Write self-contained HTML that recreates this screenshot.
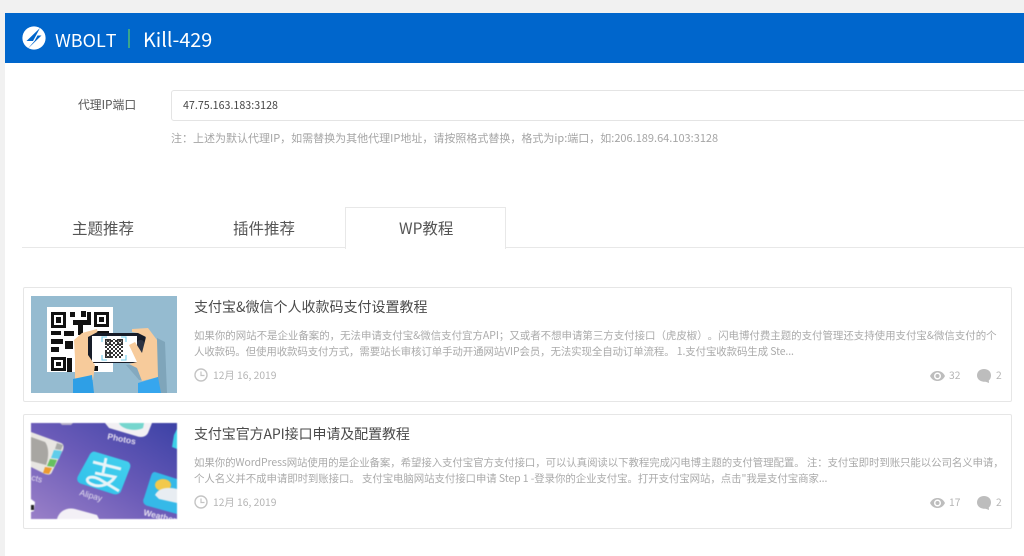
<!DOCTYPE html>
<html><head><meta charset="utf-8">
<style>
html,body{margin:0;padding:0;width:1024px;height:556px;overflow:hidden;background:#f1f1f1}
body{position:relative;font-family:"Noto Sans CJK SC","Liberation Sans",sans-serif;text-spacing-trim:space-all;font-weight:400}
.a{position:absolute;white-space:nowrap}
.card{position:absolute;left:23px;width:987px;height:113px;background:#fff;border:1px solid #e6e6e6;border-radius:2px}
.t{font-size:14px;color:#4a4a4a;line-height:20px}
.d{font-size:10.450px;color:#aaa;line-height:17px}
.m{font-size:10.300px;color:#b4b4b4;line-height:14px}
</style></head><body>
<div class="a" style="left:5px;top:13px;width:1019px;height:543px;background:#fff"></div>
<div class="a" style="left:5px;top:13px;width:1019px;height:50px;background:#0066cc"></div>
<svg class="a" style="left:22px;top:26px" width="24" height="24" viewBox="0 0 24 24"><circle cx="12" cy="12" r="11.600" fill="#fff"/><path d="M18 2L4.500 15H11L14 9.500Z" fill="#0066cc"/><path d="M19.500 9.500H15.500L12.500 15L5.500 23Z" fill="#0066cc"/></svg>
<div class="a" style="left:55px;top:27px;font-size:18px;line-height:26px;color:#fff">WBOLT</div>
<div class="a" style="left:128px;top:29px;width:2px;height:19px;background:#3aa58c"></div>
<div class="a" style="left:143px;top:26px;font-size:19.800px;line-height:26px;color:#fff">Kill-429</div>

<div class="a" style="left:78px;top:96px;font-size:11.800px;line-height:18px;color:#555">代理IP端口</div>
<div class="a" style="left:171px;top:90px;width:860px;height:29px;border:1px solid #e4e4e4;border-radius:3px;background:#fff"></div>
<div class="a" style="left:183px;top:97px;font-size:10.700px;line-height:18px;color:#444">47.75.163.183:3128</div>
<div class="a" style="left:171px;top:129px;font-size:11px;line-height:18px;color:#a5a5a5">注：上述为默认代理IP，如需替换为其他代理IP地址，请按照格式替换，格式为ip:端口，如:206.189.64.103:3128</div>

<div class="a" style="left:22px;top:247px;width:1002px;height:1px;background:#e8e8e8"></div>
<div class="a" style="left:72px;top:217px;font-size:15.500px;line-height:22px;color:#555">主题推荐</div>
<div class="a" style="left:233px;top:217px;font-size:15.500px;line-height:22px;color:#555">插件推荐</div>
<div class="a" style="left:345px;top:207px;width:159px;height:41px;background:#fff;border:1px solid #e8e8e8;border-bottom:0"></div>
<div class="a" style="left:399px;top:217px;font-size:15.500px;line-height:22px;color:#555">WP教程</div>

<div class="card" style="top:287px"></div>
<svg class="a" style="left:31px;top:296px;filter:blur(.35px)" width="146" height="97" viewBox="0 0 146 97">
<defs><pattern id="q" width="4" height="4" patternUnits="userSpaceOnUse"><rect width="4" height="4" fill="#fff"/><rect width="2" height="2" fill="#333"/><rect x="2" y="2" width="2" height="2" fill="#333"/></pattern></defs>
<rect width="146" height="97" fill="#95bbd0"/>
<path d="M126 42L134 46L136 97H126Z" fill="#7fa5ba"/>
<rect x="16" y="11" width="66" height="65" fill="#fff"/>
<g fill="#111">
<path fill-rule="evenodd" d="M20 16h15v16H20zM23 19v10h9V19z"/><rect x="25" y="21" width="5" height="6"/>
<path fill-rule="evenodd" d="M63 16h15v15H63zM66 19v9h9v-9z"/><rect x="68" y="21" width="5" height="5"/>
<path fill-rule="evenodd" d="M20 61h15v14H20zM23 64v8h9v-8z"/><rect x="25" y="66" width="5" height="4"/>
<rect x="39" y="16" width="5" height="5"/><rect x="50" y="15" width="5" height="6"/><rect x="56" y="16" width="4" height="13"/><rect x="42" y="24" width="14" height="5"/><rect x="47" y="29" width="5" height="10"/><rect x="20" y="35" width="10" height="4"/><rect x="33" y="35" width="10" height="5"/><rect x="20" y="43" width="12" height="5"/><rect x="34" y="45" width="8" height="8"/><rect x="20" y="51" width="8" height="5"/><rect x="36" y="62" width="5" height="14"/><rect x="63" y="35" width="15" height="4"/>
<rect x="45" y="68" width="14" height="3"/><rect x="60" y="70" width="7" height="5"/>
</g>
<path d="M95 69L110 68L116 84L108 84Z" fill="#7fa5ba" opacity=".8"/>
<path d="M57 40Q57 37 60 37H108Q115 37 115 44V60Q115 67 108 67H60Q57 67 57 64Z" fill="#171c28"/>
<rect x="61" y="40" width="45" height="26" fill="#fff"/>
<rect x="106" y="44" width="7" height="14" rx="3" fill="#2c3242"/>
<rect x="74" y="43" width="18" height="19" fill="url(#q)"/>
<path fill-rule="evenodd" d="M74 43h6v6h-6zM75.500 44.500v3h3v-3zM86 43h6v6h-6zM87.500 44.500v3h3v-3zM74 56h6v6h-6zM75.500 57.500v3h3v-3z" fill="#333"/>
<path d="M71 46V41H76M90 41H95V46M95 59V64H90M76 64H71V59" stroke="#6fcbe9" stroke-width="1.100" fill="none"/>
<path d="M43 44L51 37L66 33L66.500 36L57 41V59L64 69L62 84H44V62Z" fill="#f7cb9b"/>
<path d="M101 33L117 32L126 44L127 81L111 85L106 72L98 68L106 66L98 49L104 46L111 57L113 49L115 41L107 37L101 36Z" fill="#f7cb9b"/>
<path d="M42 83L61 79L63 97H42Z" fill="#2e9fe6"/>
<path d="M107 87L127 81L130 97H107Z" fill="#36a6ee"/>
</svg>
<div class="a t" style="left:194px;top:297px">支付宝&amp;微信个人收款码支付设置教程</div>
<div class="a d" style="left:194px;top:327px">如果你的网站不是企业备案的，无法申请支付宝&amp;微信支付宜方API；又或者不想申请第三方支付接口（虎皮椒）。闪电博付费主题的支付管理还支持使用支付宝&amp;微信支付的个</div>
<div class="a d" style="left:194px;top:343px;letter-spacing:-.1px">人收款码。但使用收款码支付方式，需要站长审核订单手动开通网站VIP会员，无法实现全自动订单流程。 1.支付宝收款码生成 Ste...</div>
<svg class="a" style="left:194px;top:368px" width="14" height="14" viewBox="0 0 14 14"><circle cx="7" cy="7" r="6" fill="none" stroke="#c4c4c4" stroke-width="1.400"/><path d="M7 3.500V7.500H10.500" fill="none" stroke="#c4c4c4" stroke-width="1.200"/></svg>
<div class="a m" style="left:213px;top:368px">12月 16, 2019</div>
<svg class="a" style="left:930px;top:370px" width="15" height="12" viewBox="0 0 15 12"><path fill="#bdbdbd" fill-rule="evenodd" d="M0 6C2 2 5 1 7.500 1S13 2 15 6C13 10 10 11 7.500 11S2 10 0 6ZM7.500 2.500A3.500 3.500 0 1 0 7.500 9.500A3.500 3.500 0 1 0 7.500 2.500Z"/><circle cx="7.500" cy="6" r="2" fill="#bdbdbd"/></svg>
<div class="a m" style="left:949px;top:368px">32</div>
<svg class="a" style="left:977px;top:369px" width="15" height="15" viewBox="0 0 15 15"><path fill="#bdbdbd" d="M7 0C11 0 14 2.600 14 6.200C14 9 12.800 10.800 11.800 11.400L12 14C10.600 13.400 9.500 13 8.500 12.700C4 13.200 0 10.500 0 6.500C0 2.600 3 0 7 0Z"/></svg>
<div class="a m" style="left:996px;top:368px">2</div>

<div class="card" style="top:414px"></div>
<svg class="a" style="left:31px;top:423px;filter:blur(.6px)" width="146" height="96" viewBox="0 0 146 96">
<defs><linearGradient id="g" x1="1" y1="0" x2="0" y2="1"><stop offset="0" stop-color="#3c42a6"/><stop offset=".5" stop-color="#6a5bb8"/><stop offset="1" stop-color="#9a80c8"/></linearGradient>
<linearGradient id="b" x1="0" y1="1" x2="1" y2="0"><stop offset="0" stop-color="#2fc0ea"/><stop offset="1" stop-color="#45d2ee"/></linearGradient></defs>
<rect width="146" height="96" fill="url(#g)"/>
<path d="M29 0H42L40 2H31Z" fill="#b5b0c8"/>
<path d="M0 9L30 20C33 21 33 24 32 27L21 49C20 52 17 52 14 51L0 44Z" fill="#e8e6e2"/>
<path d="M0 14L14 19C18 24 18 34 15 42L0 38Z" fill="#a8a6a2"/>
<path d="M26 20l6 2-2 5-6-1z" fill="#a9aba8"/><path d="M23 27l8 1-3 8-8-1z" fill="#5fcdea"/><path d="M19 36l7 1-3 7-7-1z" fill="#66c060"/><path d="M14 44l7 1-3 6-6-1z" fill="#ee9a30"/>
<path d="M74 0H121L117 10C115 14 110 15 105 13L78 5Z" fill="#f2f0f3"/>
<path d="M88 0C90 6 104 9 112 5L113 0Z" fill="#75d6ce"/>
<path d="M65 29L95 38C99 39 100 42 99 45L90 68C89 71 85 72 82 71L51 61C47 60 45 57 47 53L58 33C60 29 62 28 65 29Z" fill="url(#b)"/>
<g fill="none" stroke="#e8f4f8" stroke-width="3"><path d="M62 39L90 46"/><path d="M75 35L72 50"/><path d="M64 50L84 54C80 60 70 66 60 61C52 57 58 51 68 56L88 68"/></g>
<path d="M124 49L146 56V91L117 83C113 82 111 79 113 75L120 53C121 50 122 49 124 49Z" fill="#35b9e8"/>
<ellipse cx="132" cy="62" rx="8" ry="6" fill="#f2c94c"/><path d="M124 72C128 64 138 64 146 66V80L128 76Z" fill="#e8edf2"/>
<path d="M26 96C28 88 36 84 44 86L66 92L68 96Z" fill="#f3f0f6"/>
<path d="M146 6V26L141 24L143 12Z" fill="#3cd0e8"/>
<path d="M0 76L4 79L3 88L0 89Z" fill="#fff"/><rect x="0" y="82" width="3" height="5" fill="#222"/>
<text x="48" y="72" font-size="8.500" fill="#e6e0f0" transform="rotate(16 48 72)" font-family="Liberation Sans">Alipay</text>
<text x="76" y="16" font-size="8.500" font-weight="bold" fill="#e6e0f0" transform="rotate(11 76 16)" font-family="Liberation Sans">Photos</text>
<text x="112" y="92" font-size="8.500" font-weight="bold" fill="#e6e0f0" transform="rotate(14 112 92)" font-family="Liberation Sans">Weather</text>
<text x="0" y="57" font-size="8.500" fill="#e6e0f0" transform="rotate(14 0 57)" font-family="Liberation Sans">cts</text>
</svg>
<div class="a t" style="left:194px;top:424px;letter-spacing:-.1px">支付宝官方API接口申请及配置教程</div>
<div class="a d" style="left:194px;top:454px;letter-spacing:-.08px">如果你的WordPress网站使用的是企业备案，希望接入支付宝官方支付接口，可以认真阅读以下教程完成闪电博主题的支付管理配置。 注：支付宝即时到账只能以公司名义申请，</div>
<div class="a d" style="left:194px;top:470px;letter-spacing:-.08px">个人名义并不成申请即时到账接口。 支付宝电脑网站支付接口申请 Step 1 -登录你的企业支付宝。打开支付宝网站，点击"我是支付宝商家...</div>
<svg class="a" style="left:194px;top:495px" width="14" height="14" viewBox="0 0 14 14"><circle cx="7" cy="7" r="6" fill="none" stroke="#c4c4c4" stroke-width="1.400"/><path d="M7 3.500V7.500H10.500" fill="none" stroke="#c4c4c4" stroke-width="1.200"/></svg>
<div class="a m" style="left:213px;top:495px">12月 16, 2019</div>
<svg class="a" style="left:930px;top:497px" width="15" height="12" viewBox="0 0 15 12"><path fill="#bdbdbd" fill-rule="evenodd" d="M0 6C2 2 5 1 7.500 1S13 2 15 6C13 10 10 11 7.500 11S2 10 0 6ZM7.500 2.500A3.500 3.500 0 1 0 7.500 9.500A3.500 3.500 0 1 0 7.500 2.500Z"/><circle cx="7.500" cy="6" r="2" fill="#bdbdbd"/></svg>
<div class="a m" style="left:949px;top:495px">17</div>
<svg class="a" style="left:977px;top:496px" width="15" height="15" viewBox="0 0 15 15"><path fill="#bdbdbd" d="M7 0C11 0 14 2.600 14 6.200C14 9 12.800 10.800 11.800 11.400L12 14C10.600 13.400 9.500 13 8.500 12.700C4 13.200 0 10.500 0 6.500C0 2.600 3 0 7 0Z"/></svg>
<div class="a m" style="left:996px;top:495px">2</div>
</body></html>
